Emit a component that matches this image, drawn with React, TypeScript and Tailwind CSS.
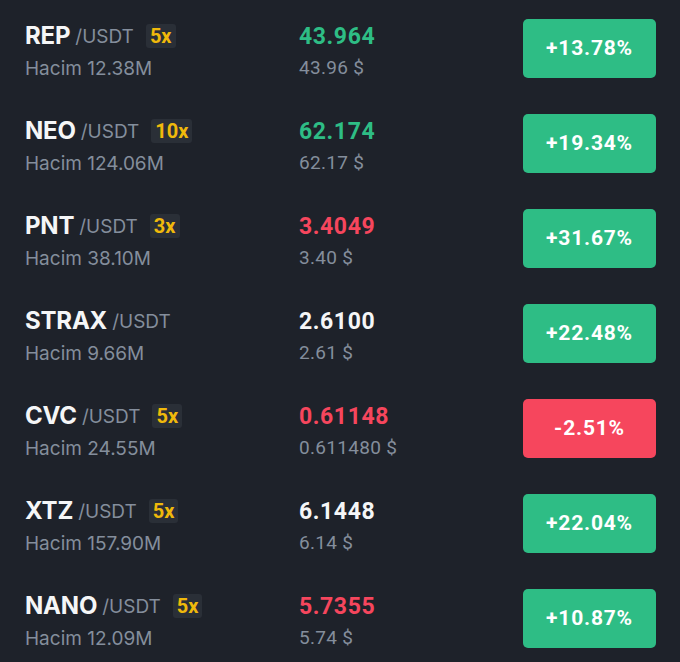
import React from "react";

type Row = {
  sym: string;
  lev?: string;
  vol: string;
  price: string;
  priceColor: "green" | "red" | "white";
  usd: string;
  chg: string;
  up: boolean;
};

const rows: Row[] = [
  { sym: "REP", lev: "5x", vol: "12.38M", price: "43.964", priceColor: "green", usd: "43.96 $", chg: "+13.78%", up: true },
  { sym: "NEO", lev: "10x", vol: "124.06M", price: "62.174", priceColor: "green", usd: "62.17 $", chg: "+19.34%", up: true },
  { sym: "PNT", lev: "3x", vol: "38.10M", price: "3.4049", priceColor: "red", usd: "3.40 $", chg: "+31.67%", up: true },
  { sym: "STRAX", vol: "9.66M", price: "2.6100", priceColor: "white", usd: "2.61 $", chg: "+22.48%", up: true },
  { sym: "CVC", lev: "5x", vol: "24.55M", price: "0.61148", priceColor: "red", usd: "0.611480 $", chg: "-2.51%", up: false },
  { sym: "XTZ", lev: "5x", vol: "157.90M", price: "6.1448", priceColor: "white", usd: "6.14 $", chg: "+22.04%", up: true },
  { sym: "NANO", lev: "5x", vol: "12.09M", price: "5.7355", priceColor: "red", usd: "5.74 $", chg: "+10.87%", up: true },
];

const priceCls = {
  green: "text-[#2ebd85]",
  red: "text-[#f6465d]",
  white: "text-[#f5f6f7]",
};

export default function App() {
  return (
    <div className="w-[680px] h-[662px] overflow-hidden bg-[#1e222a] pt-[1px] font-['Inter','Noto_Sans',sans-serif]">
      {rows.map((r) => (
        <div key={r.sym} className="flex h-[95px] items-start pl-[25px] pr-[24px]">
          <div className="w-[274px] pt-[20px]">
            <div className="flex items-center h-[29px]">
              <span className="text-[24px] leading-[29px] font-bold text-[#f5f6f7] tracking-[-0.2px]">{r.sym}</span>
              <span className="ml-[5px] text-[19px] leading-[29px] text-[#848e9c] mt-[2px]">/USDT</span>
              {r.lev && (
                <span className="ml-[12px] mt-[1px] h-[24px] px-[4px] rounded-[3px] bg-[#2a2f37] flex items-center text-[20px] font-bold text-[#f0b90b] font-['Roboto',sans-serif]">
                  {r.lev}
                </span>
              )}
            </div>
            <div className="mt-[7px] text-[19px] leading-[24px] text-[#848e9c]">Hacim {r.vol}</div>
          </div>
          <div className="flex-1 pt-[22px] font-['Roboto',sans-serif]">
            <div className={`text-[23px] leading-[28px] font-bold tracking-[0.6px] ${priceCls[r.priceColor]}`}>{r.price}</div>
            <div className="mt-[5px] text-[19px] leading-[24px] text-[#848e9c] tracking-[0.3px]">{r.usd}</div>
          </div>
          <div
            className={`mt-[18px] w-[133px] h-[59px] rounded-[5px] flex items-center justify-center text-[21px] font-bold text-white tracking-[0.8px] font-['Roboto',sans-serif] ${
              r.up ? "bg-[#2ebd85]" : "bg-[#f6465d]"
            }`}
          >
            {r.chg}
          </div>
        </div>
      ))}
    </div>
  );
}
